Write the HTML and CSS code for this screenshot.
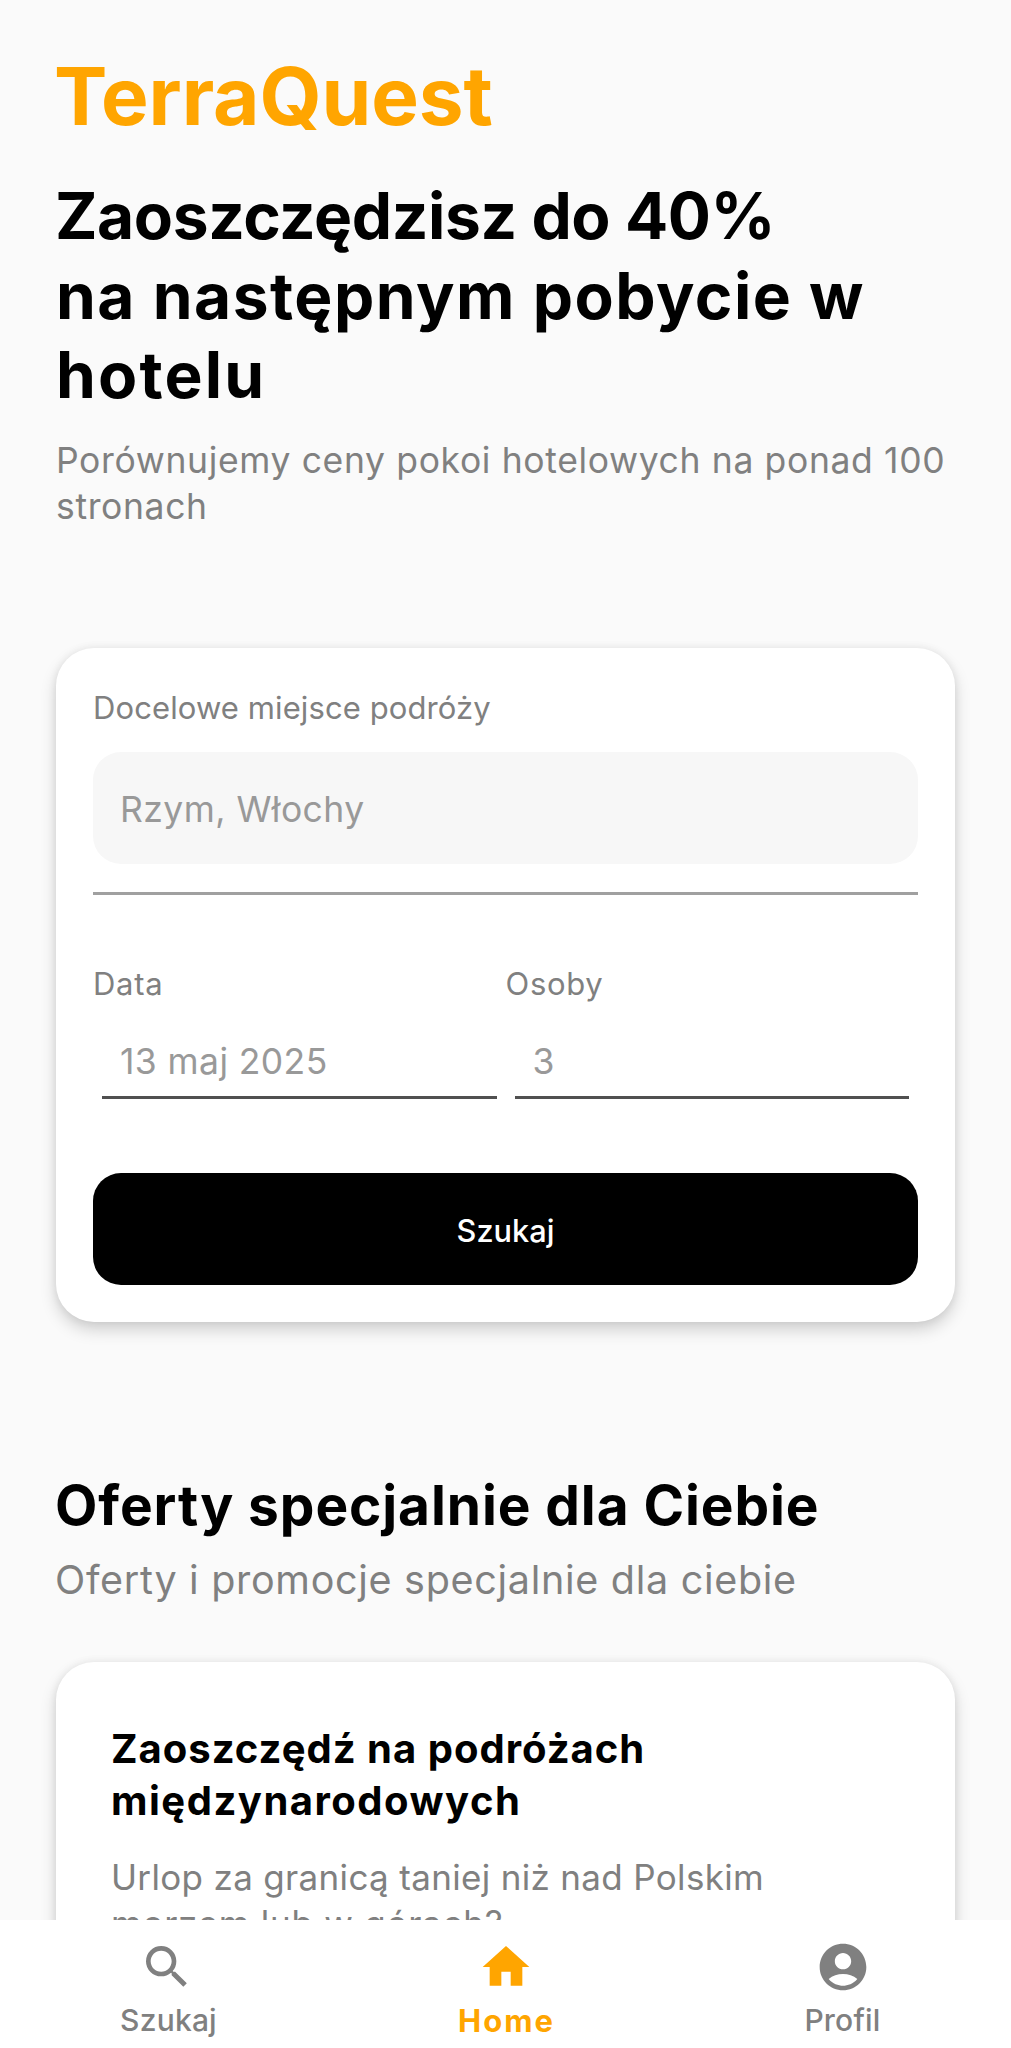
FILE: index.html
```html
<!DOCTYPE html>
<html lang="pl">
<head>
<meta charset="utf-8">
<title>TerraQuest</title>
<link rel="stylesheet" href="styles.css">
</head>
<body>
<div class="app">
  <main class="content">
    <h1 class="brand">TerraQuest</h1>
    <h2 class="headline">
      <span class="line line-save">Zaoszczędzisz do 40%</span>
      <span class="line line-stay">na następnym pobycie w</span>
      <span class="line line-hotel">hotelu</span>
    </h2>
    <p class="lead">Porównujemy ceny pokoi hotelowych na ponad 100<br>stronach</p>

    <form class="card search">
      <label class="label label-place">Docelowe miejsce podróży</label>
      <div class="place">Rzym, Włochy</div>
      <div class="divider"></div>
      <div class="fields">
        <div class="field">
          <label class="label">Data</label>
          <div class="value">13 maj 2025</div>
        </div>
        <div class="field">
          <label class="label">Osoby</label>
          <div class="value">3</div>
        </div>
      </div>
      <button class="submit" type="button">Szukaj</button>
    </form>

    <h2 class="section-title">Oferty specjalnie dla Ciebie</h2>
    <p class="section-sub">Oferty i promocje specjalnie dla ciebie</p>

    <article class="card offer">
      <h3 class="offer-title">
        <span class="line">Zaoszczędź na podróżach</span>
        <span class="line line-abroad">międzynarodowych</span>
      </h3>
      <p class="offer-text">Urlop za granicą taniej niż nad Polskim<br><span class="offer-tail">morzem lub w górach?</span></p>
    </article>
  </main>

  <nav class="tabs">
    <a class="tab">
      <svg class="icon icon-search" viewBox="0 0 24 24"><path d="M15.5 14h-.79l-.28-.27A6.471 6.471 0 0 0 16 9.5 6.5 6.5 0 1 0 9.5 16c1.61 0 3.09-.59 4.23-1.57l.27.28v.79l5 4.99L20.49 19l-4.99-5zm-6 0C7.01 14 5 11.99 5 9.5S7.01 5 9.5 5 14 7.01 14 9.5 11.99 14 9.5 14z"/></svg>
      <span>Szukaj</span>
    </a>
    <a class="tab tab-active">
      <svg class="icon" viewBox="0 0 24 24"><path d="M10 20v-6h4v6h5v-8h3L12 3 2 12h3v8z"/></svg>
      <span class="tab-name">Home</span>
    </a>
    <a class="tab">
      <svg class="icon" viewBox="0 0 24 24"><path d="M12 2C6.48 2 2 6.48 2 12s4.48 10 10 10 10-4.48 10-10S17.52 2 12 2zm0 4c1.93 0 3.5 1.57 3.5 3.5S13.93 13 12 13s-3.5-1.57-3.5-3.5S10.07 6 12 6zm0 14c-2.03 0-4.43-.82-6.14-2.88C7.55 15.8 9.68 15 12 15s4.45.8 6.14 2.12C16.43 19.18 14.03 20 12 20z"/></svg>
      <span>Profil</span>
    </a>
  </nav>
</div>
</body>
</html>
```
FILE: styles.css
```css
* { box-sizing: border-box; margin: 0; padding: 0; }
body { background: #fafafa; color: #000; font-family: Inter, sans-serif; }
.app { display: flex; flex-direction: column; height: 2048px; overflow: hidden; }
.content { flex: 1; min-height: 0; overflow: hidden; padding: 48px 56px 0; white-space: nowrap; }
.line { display: block; }

.brand { color: #ffa500; font-size: 80px; line-height: 96px; letter-spacing: -.1px; text-indent: -2px; }
.headline { margin-top: 32px; font-size: 64px; line-height: 79.7px; }
.line-save { letter-spacing: -.4px; text-indent: -1px; }
.line-stay { letter-spacing: 1.5px; }
.line-hotel { letter-spacing: 2.2px; }
.lead { margin-top: 23px; color: #808080; font-size: 35.5px; line-height: 46px; letter-spacing: .64px; }

.card { background: #fff; border-radius: 38px; box-shadow: 0 8px 16px rgba(0, 0, 0, .17), 0 0 8px rgba(0, 0, 0, .07); }
.search { height: 674px; margin-top: 118px; padding: 41px 37px 0; }
.label { display: block; color: #808080; font-size: 31px; line-height: 38px; letter-spacing: .7px; }
.label-place { letter-spacing: .1px; }
.place { height: 112px; margin-top: 25px; padding: 2px 0 0 27px; border-radius: 28px; background: #f7f7f7; color: #999; font-size: 35.5px; line-height: 112px; letter-spacing: .45px; }
.divider { height: 3px; margin-top: 28px; background: #a0a0a0; }
.fields { display: flex; margin-top: 70px; }
.field { flex: 1; }
.value { height: 60px; margin: 36px 9px 0; padding-left: 18px; border-bottom: 3px solid #505050; color: #999; font-size: 35.5px; line-height: 46px; letter-spacing: .4px; }
.submit { display: block; width: 100%; height: 112px; margin-top: 74px; padding-top: 3px; border: 0; border-radius: 28px; background: #000; color: #fff; font: 500 30.7px Inter, sans-serif; }

.section-title { margin-top: 149px; font-size: 55px; line-height: 68px; letter-spacing: .9px; text-indent: -1px; }
.section-sub { margin-top: 16px; color: #808080; font-size: 39.5px; line-height: 50px; letter-spacing: .7px; text-indent: -1px; }
.offer { height: 520px; margin-top: 57px; padding: 61px 55px 0; }
.offer-title { font-size: 40px; line-height: 52px; letter-spacing: 1px; }
.line-abroad { letter-spacing: 1.5px; }
.offer-text { margin-top: 27px; color: #808080; font-size: 35px; line-height: 46px; letter-spacing: .33px; }
.offer-tail { letter-spacing: .75px; }

.tabs { display: flex; height: 128px; background: #fff; }
.tab { flex: 1; display: flex; flex-direction: column; align-items: center; gap: 7px; padding-top: 19px; color: #808080; font-size: 30px; font-weight: 500; line-height: 37px; letter-spacing: .2px; }
.tab-active { color: #ffa500; font-size: 31px; font-weight: 700; letter-spacing: 2px; }
.tab-name { margin-right: -2px; }
.icon { width: 56px; height: 56px; fill: currentColor; }
.icon-search { margin-right: 3px; }
```
